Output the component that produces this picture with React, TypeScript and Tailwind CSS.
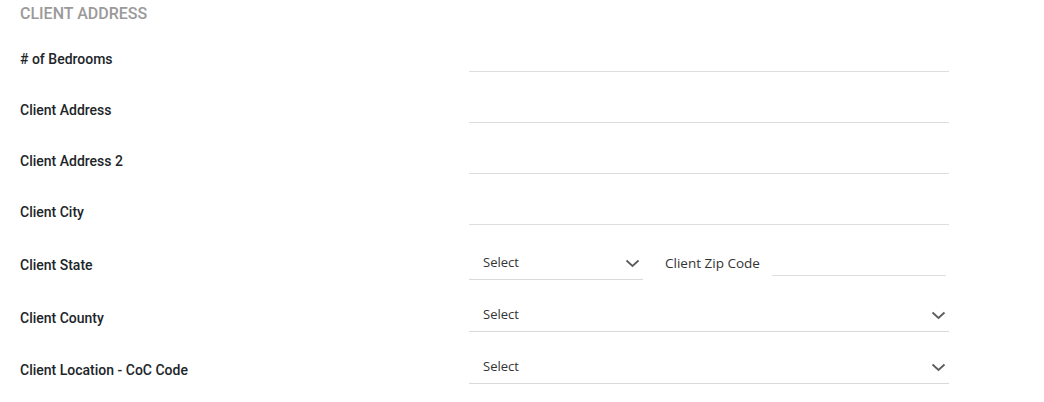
const roboto = { fontFamily: 'Roboto, "Liberation Sans", sans-serif' };
const openSans = { fontFamily: '"Open Sans", sans-serif' };

function Chevron() {
  return (
    <svg width="15" height="9" viewBox="0 0 15 9" fill="none" className="text-[#5c5c5c]">
      <polyline points="1.5,1.5 7.5,7 13.5,1.5" stroke="currentColor" strokeWidth="1.8" />
    </svg>
  );
}

function TextRow({ label }: { label: string }) {
  return (
    <div className="flex h-[51px] items-end">
      <div className="flex h-[25px] w-[449px] items-center text-[14px] font-medium text-[#212529]">
        {label}
      </div>
      <div className="h-[34px] w-[480px] border-b border-[#dedede]" />
    </div>
  );
}

function SelectBox({ width }: { width: string }) {
  return (
    <div className={`flex h-[34px] items-center justify-between border-b border-[#d9d9d9] pl-[14px] pr-[3px] pt-[1px] ${width}`}>
      <span className="text-[13px] text-[#333]" style={openSans}>
        Select
      </span>
      <Chevron />
    </div>
  );
}

function SelectRow({ label }: { label: string }) {
  return (
    <div className="flex h-[52px] items-end">
      <div className="flex h-[27px] w-[449px] items-center text-[14px] font-medium text-[#212529]">
        {label}
      </div>
      <SelectBox width="w-[480px]" />
    </div>
  );
}

export default function App() {
  return (
    <div className="min-h-[402px] bg-white px-5" style={roboto}>
      <h2 className="h-[21px] pt-[3px] text-[16px] font-medium uppercase leading-[21px] text-[#9a9a9a]">
        Client Address
      </h2>
      <TextRow label="# of Bedrooms" />
      <TextRow label="Client Address" />
      <TextRow label="Client Address 2" />
      <TextRow label="Client City" />

      <div className="mt-[3px] flex h-[52px] items-end">
        <div className="flex h-[29px] w-[449px] items-center text-[14px] font-medium text-[#212529]">
          Client State
        </div>
        <SelectBox width="w-[174px]" />
        <div className="ml-[22px] flex h-[34px] items-center pt-[1px]">
          <span className="w-[107px] text-[13.5px] text-[#333]" style={openSans}>
            Client Zip Code
          </span>
          <div className="h-[29px] w-[174px] self-start border-b border-[#dedede]" />
        </div>
      </div>
      <SelectRow label="Client County" />
      <SelectRow label="Client Location - CoC Code" />
    </div>
  );
}
